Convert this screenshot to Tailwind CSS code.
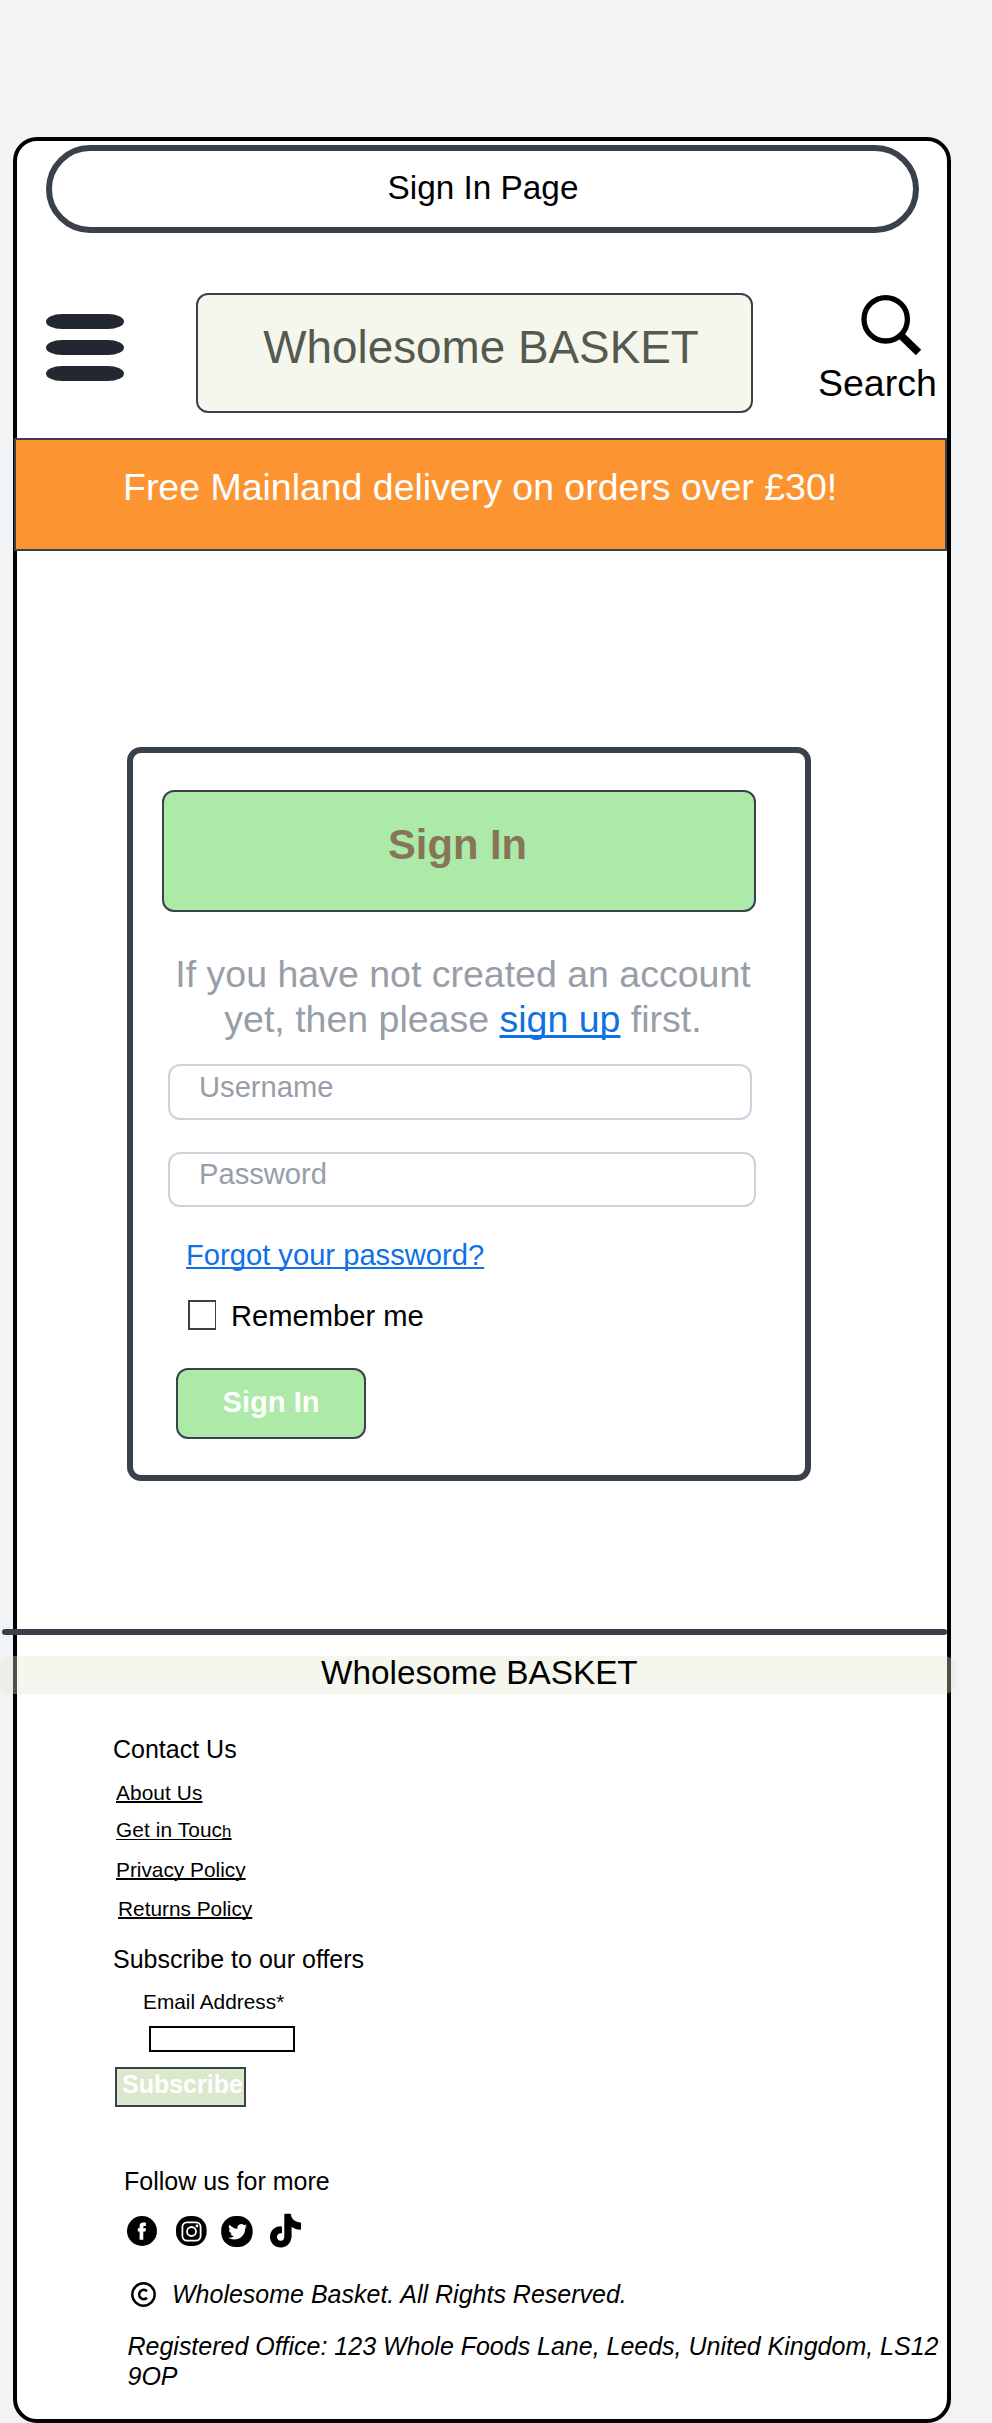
<!DOCTYPE html>
<html lang="en">
<head>
<meta charset="utf-8">
<title>Wholesome Basket - Sign In</title>
<script src="https://cdn.jsdelivr.net/npm/@tailwindcss/browser@4"></script>
</head>
<body class="bg-[#f1f3f5] text-black overflow-x-hidden font-['Liberation_Sans',Arial,sans-serif]">
<div class="pt-[137px] pl-[13px] h-[2423px] overflow-hidden">
  <div class="w-[937.6px] h-[2286px] bg-white border-4 border-black rounded-3xl flex flex-col items-start">

    <div class="mt-1 ml-[29px] w-[873px] h-[88px] shrink-0 border-6 border-[#3a414a] rounded-full text-center text-[33.33px] leading-[73px] pl-px">Sign In Page</div>

    <header class="mt-[60px] flex items-start h-[120px] shrink-0">
      <div class="ml-[29px] mt-[21px] w-[78px] flex flex-col gap-[11px]">
        <div class="h-[15px] bg-[#232730] rounded-[16px/7.5px]"></div>
        <div class="h-[15px] bg-[#232730] rounded-[16px/7.5px]"></div>
        <div class="h-[15px] bg-[#232730] rounded-[16px/7.5px]"></div>
      </div>
      <div class="ml-[72px] w-[557px] h-[120px] shrink-0 border-2 border-[#3a414a] rounded-xl bg-[#f5f7ed] text-[#555a4f] text-[45.83px] leading-[105px] text-center pl-[13px] whitespace-nowrap">Wholesome BASKET</div>
      <div class="ml-16 flex flex-col">
        <svg class="ml-[39px] w-[70px] h-[70px]" viewBox="0 0 70 70" fill="none" stroke="#000">
          <circle cx="29.7" cy="26.3" r="21.7" stroke-width="5.3"/>
          <path d="M44 41.5 L62.5 59.5" stroke-width="7.6"/>
        </svg>
        <span class="text-[37.5px] leading-10 pl-px">Search</span>
      </div>
    </header>

    <div class="mt-[25px] -ml-[3px] w-[933px] h-[113px] shrink-0 border-2 border-[#3a414a] bg-[#fc9432] text-white text-[37.5px] leading-[94px] pl-[107px] whitespace-nowrap tracking-[-0.02px]">Free Mainland delivery on orders over £30!</div>

    <main class="mt-[196px] ml-[110px] w-[684px] h-[734px] shrink-0 border-6 border-[#3a414a] rounded-[14px] flex flex-col items-start">
      <h1 class="mt-[37px] ml-[29px] w-[594px] h-[122px] shrink-0 border-2 border-[#3a414a] rounded-xl bg-[#ade9a7] text-[#86755b] text-[41.67px] leading-[105px] font-bold text-center pr-[3px]">Sign In</h1>
      <p class="mt-[39.5px] ml-[30px] w-[600px] text-center text-[#979ea8] text-[37.5px] leading-[45px]">If you have not created an account<br>yet, then please <a class="text-[#1071e5] underline decoration-[3px] underline-offset-[3px] [text-decoration-skip-ink:none]">sign up</a> first.</p>
      <div class="mt-[22.5px] ml-[35px] w-[584px] h-14 border-2 border-[#cbd2dc] rounded-xl pl-[29px] text-[#979ea8] text-[29.17px] leading-[42px]">Username</div>
      <div class="mt-8 ml-[35px] w-[588px] h-[55px] border-2 border-[#cbd2dc] rounded-xl pl-[29px] text-[#979ea8] text-[29.17px] leading-[41px]">Password</div>
      <a class="mt-[31px] ml-[53px] text-[#1071e5] text-[29.17px] leading-[34px] underline decoration-2 underline-offset-2 [text-decoration-skip-ink:none]">Forgot your password?</a>
      <label class="mt-7 ml-[55px] flex items-start gap-[15px] text-[29.17px] leading-8">
        <span class="w-7 h-[30px] border-2 border-r border-[#3a414a]"></span>Remember me
      </label>
      <button class="mt-9 ml-[42.5px] w-[190px] h-[71px] border-2 border-[#3a414a] rounded-xl bg-[#ade9a7] text-white font-bold text-[29.17px] leading-[64px] pl-[45px] flex items-start">Sign In</button>
    </main>

    <div class="mt-[148px] -ml-[15px] w-[945px] h-1.5 shrink-0 rounded-full bg-[#3a414a]"></div>

    <footer class="w-[929px]">
      <div class="mt-[21px] -ml-[18px] w-[957px] h-[38px] rounded-xl bg-[rgb(227,233,205)]/35 text-[33.33px] leading-[33px] pl-[322px]">Wholesome BASKET</div>
      <div class="pl-[96px] flex flex-col items-start">
        <h2 class="mt-10 text-[25px] leading-[30px]">Contact Us</h2>
        <a class="mt-4 ml-[3px] text-[20.83px] leading-[25px] underline decoration-2 underline-offset-1 [text-decoration-skip-ink:none] tracking-[0.1px]">About Us</a>
        <a class="mt-3 ml-[3px] text-[20.83px] leading-[25px] h-[25px] underline decoration-1 underline-offset-2 [text-decoration-skip-ink:none] tracking-[0.1px]">Get in Touc<span class="text-[16.67px] underline decoration-2 underline-offset-1">h</span></a>
        <a class="mt-[15px] ml-[3px] text-[20.83px] leading-[25px] underline decoration-2 underline-offset-1 [text-decoration-skip-ink:none]">Privacy Policy</a>
        <a class="mt-[14px] ml-[5px] text-[20.83px] leading-[25px] underline decoration-2 underline-offset-1 [text-decoration-skip-ink:none]">Returns Policy</a>
        <h2 class="mt-[23px] text-[25px] leading-[30px]">Subscribe to our offers</h2>
        <span class="mt-[15px] ml-[30px] text-[20.83px] leading-[25px]">Email Address*</span>
        <div class="mt-3 ml-[36px] w-[146px] h-[26px] border-2 border-black"></div>
        <button class="mt-[15px] ml-[2px] w-[131px] h-10 border-2 border-[#3a414a] bg-[#dae8cb] text-white font-bold text-[25px] leading-[30px] pl-[5px] flex items-start">Subscribe</button>
        <h2 class="mt-[59px] ml-[11px] text-[25px] leading-[30px]">Follow us for more</h2>
        <div class="mt-[17px] ml-[14px] flex items-start h-[35px]">
          <svg class="mt-[3px] w-[30px] h-[30px]" viewBox="0 0 30 30">
            <circle cx="15" cy="15" r="15"/>
            <path fill="#fff" d="M12.6 23.8V15.6H10.8V12.2H12.6V10.3C12.6 7.8 13.8 6.6 16.2 6.6H18.9V9.9H17.4C16.6 9.9 16.3 10.3 16.3 11V12.2H18.9L18.5 15.6H16.3V23.8Z"/>
          </svg>
          <svg class="mt-[3px] ml-[19px] w-[31px] h-[30px]" viewBox="0 0 31 30">
            <rect width="30.6" height="30" rx="14"/>
            <g fill="none" stroke="#fff" stroke-width="1.8">
              <rect x="6.4" y="6.4" width="18.2" height="18.2" rx="4.6"/>
              <circle cx="15.5" cy="15.5" r="4.5"/>
            </g>
            <circle cx="21" cy="10" r="1.4" fill="#fff"/>
          </svg>
          <svg class="mt-[3px] ml-[14px] w-[32px] h-[31px]" viewBox="0 0 32 31">
            <rect x=".2" width="31.4" height="31" rx="14.5"/>
            <path fill="#fff" transform="translate(7.2 6.3) scale(.79)" d="M23.95 4.57a10 10 0 0 1-2.82.77 4.96 4.96 0 0 0 2.16-2.72c-.95.55-2 .95-3.13 1.18a4.92 4.92 0 0 0-8.38 4.48C7.69 8.09 4.07 6.13 1.64 3.16a4.92 4.92 0 0 0 1.52 6.57 4.9 4.9 0 0 1-2.23-.61v.06a4.92 4.92 0 0 0 3.95 4.83 5 5 0 0 1-2.21.08 4.94 4.94 0 0 0 4.6 3.42A9.87 9.87 0 0 1 0 19.54a14 14 0 0 0 7.55 2.21c9.05 0 14-7.5 14-13.98 0-.21 0-.42-.02-.63a9.94 9.94 0 0 0 2.46-2.55z"/>
          </svg>
          <svg class="ml-[17px] w-[31px] h-[35px]" viewBox="0 0 31 35">
            <path d="M14.3 1.6Q14.3 .8 15.1 .8H20Q20.8 .8 20.9 1.6C21.4 6 24.7 9 30.2 9.4Q31 9.5 31 10.3V16Q31 16.8 30.2 16.8C27 16.7 24.2 15.8 21.6 14.1V22.6C21.6 29.7 17.2 34.5 11 34.5C4.6 34.5 0 29.8 0 24C0 17.6 5.4 12.9 11.2 13.4Q12 13.5 12 14.3V20.3C9 19.8 7 21.5 7 24C7 26.2 8.7 27.7 10.7 27.7C13 27.7 14.3 26.2 14.3 23.2Z"/>
          </svg>
        </div>
        <div class="mt-[31px] ml-[18px] flex items-start h-[30px] italic text-[25px] leading-[30px]">
          <svg class="mt-[3px] mr-4 w-[25px] h-[25px]" viewBox="0 0 25 25" fill="none" stroke="#000">
            <circle cx="12.5" cy="12.5" r="11.2" stroke-width="2.4"/>
            <path d="M16 9.2A4.6 4.6 0 1 0 16 15.8" stroke-width="2.6"/>
          </svg>
          <span>Wholesome Basket. All Rights Reserved.</span>
        </div>
        <p class="mt-[22px] ml-[14.5px] w-[818px] italic text-[25px] leading-[30px] tracking-[-0.01px]">Registered Office: 123 Whole Foods Lane, Leeds, United Kingdom, LS12 9OP</p>
      </div>
    </footer>
  </div>
</div>
</body>
</html>
